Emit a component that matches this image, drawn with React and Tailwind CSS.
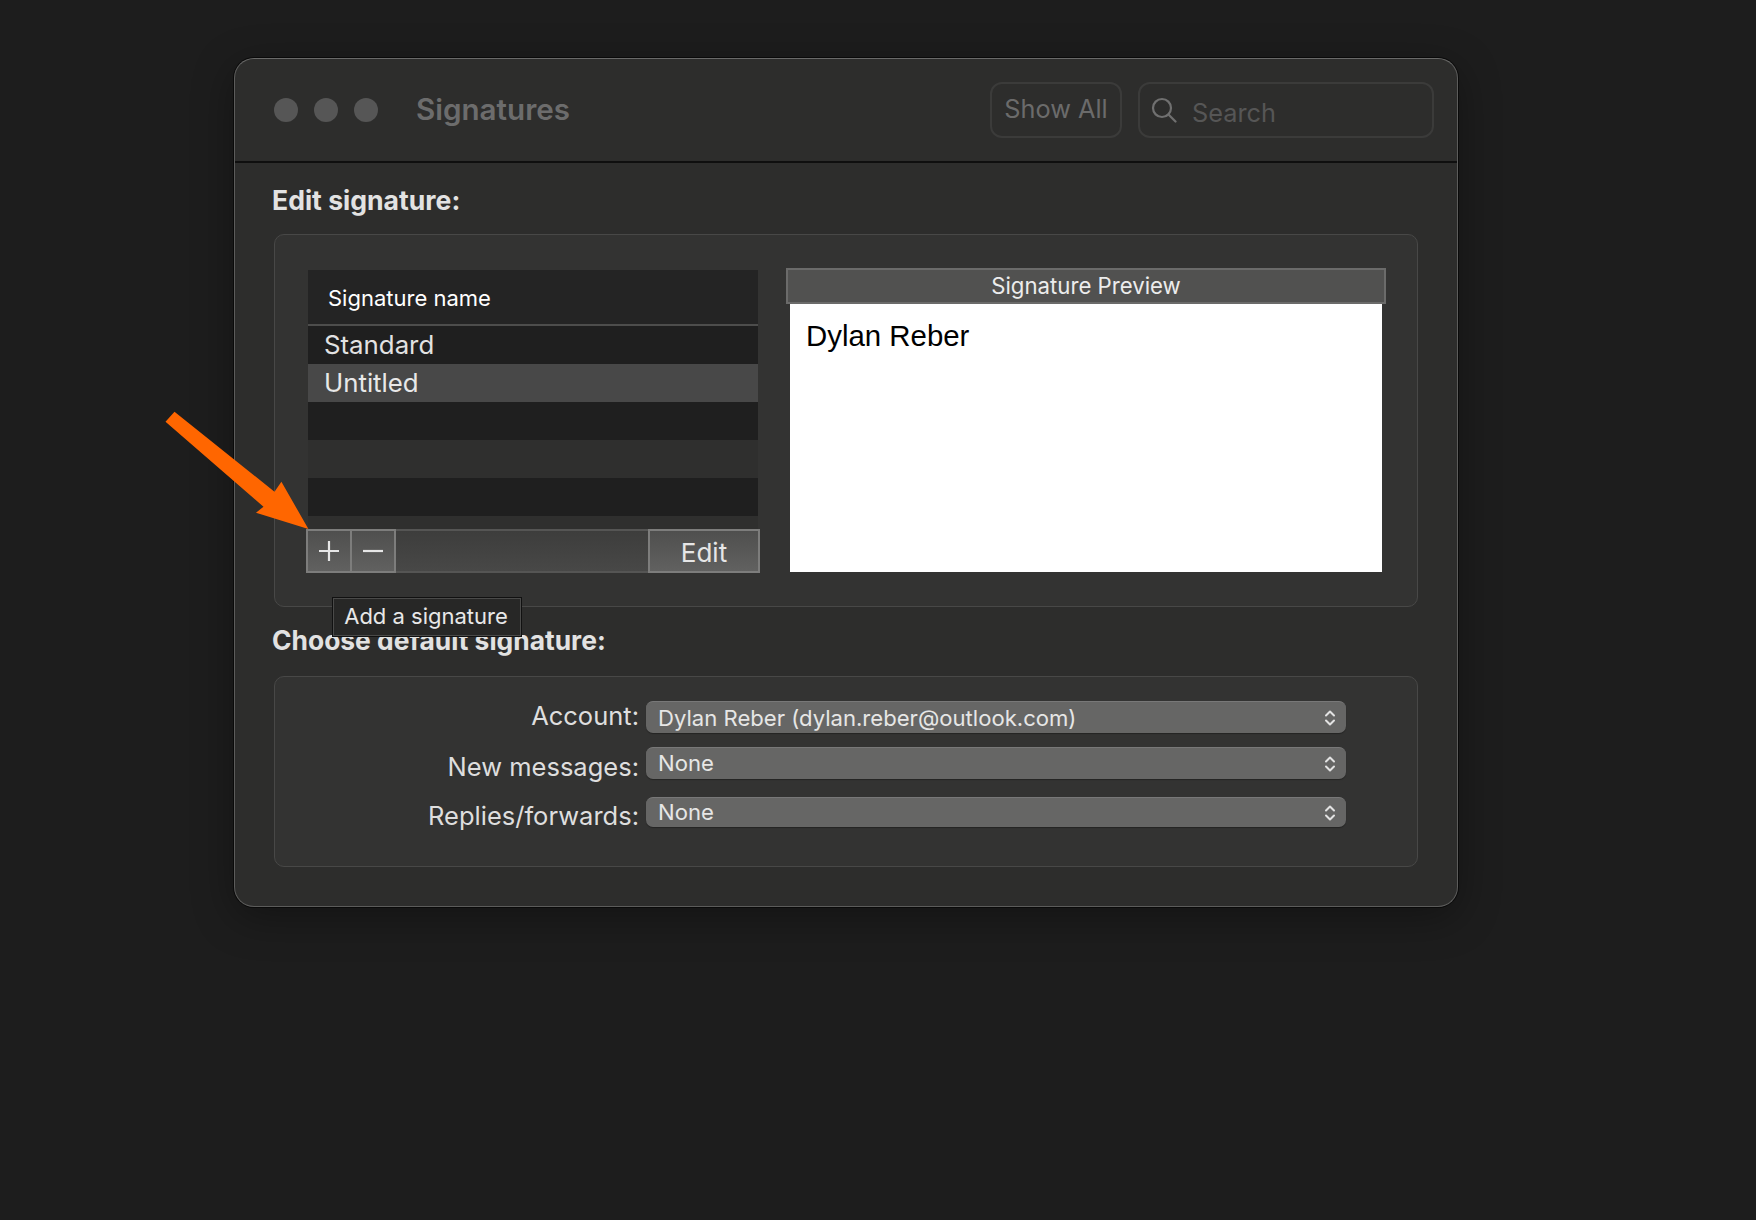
import React from "react";

const sans = "font-['Inter','Liberation_Sans',sans-serif]";

function Updown() {
  return (
    <svg width="12" height="18" viewBox="0 0 12 18" fill="none" stroke="#e2e2e2" strokeWidth="2" strokeLinecap="round" strokeLinejoin="round">
      <path d="M2 6.5 L6 2.5 L10 6.5" />
      <path d="M2 11.5 L6 15.5 L10 11.5" />
    </svg>
  );
}

function SelectRow({ label, value, labelPt, h, mt, textPb }) {
  return (
    <div className={`flex items-start ${mt}`}>
      <div className={`h-[26px] w-[364px] text-right text-[25.5px] leading-[32px] text-[#dedede] ${labelPt}`}>{label}</div>
      <div className={`ml-[7px] flex w-[700px] items-center justify-between rounded-[7px] border-t border-t-[#787878] bg-[#666665] pl-[12px] pr-[10px] shadow-[0_1px_1px_rgba(0,0,0,0.3)] ${h}`}>
        <span className={`text-[22.1px] leading-[28px] text-[#e6e6e6] ${textPb}`}>{value}</span>
        <Updown />
      </div>
    </div>
  );
}

export default function App() {
  return (
    <div className={`relative min-h-screen w-full overflow-hidden bg-[#1d1d1d] pl-[234px] pt-[58px] ${sans}`}>
      <div className="relative h-[849px] w-[1224px] rounded-[20px] border border-[#5c5c5b] border-t-[#6a6a69] bg-[#2d2d2c] shadow-[0_0_0_1px_#0a0a0a,0_10px_40px_rgba(0,0,0,0.35)]">
        {/* Title bar */}
        <div className="flex h-[104px] items-center border-b-2 border-b-[#0f0f0f] pl-[39px] pr-[23px]">
          <div className="flex gap-[16px]">
            <span className="h-[24px] w-[24px] rounded-full bg-[#565656]" />
            <span className="h-[24px] w-[24px] rounded-full bg-[#565656]" />
            <span className="h-[24px] w-[24px] rounded-full bg-[#565656]" />
          </div>
          <div className="ml-[38px] pb-[2px] text-[29.6px] font-semibold leading-[36px] text-[#6c6c6c]">Signatures</div>
          <div className="ml-auto flex h-[56px] w-[132px] items-center justify-center rounded-[12px] border-2 border-[#3b3b3a] pb-[2px] text-[25.3px] text-[#6b6b6b]">Show All</div>
          <div className="ml-[16px] flex h-[56px] w-[296px] items-center rounded-[12px] border-2 border-[#3b3b3a] pl-[11px]">
            <svg width="26" height="26" viewBox="0 0 26 26" fill="none" stroke="#707070" strokeWidth="2.2" strokeLinecap="round">
              <circle cx="11" cy="11" r="9" />
              <path d="M17.5 17.5 L24.5 24.5" />
            </svg>
            <span className="ml-[15px] mt-[6px] text-[25.3px] text-[#565656]">Search</span>
          </div>
        </div>

        {/* Content */}
        <div className="px-[39px] pt-[22px]">
          <div className="-ml-[2px] text-[26.6px] font-bold leading-[30px] text-[#e2e2e2]">Edit signature:</div>

          <div className="mt-[19px] flex h-[373px] items-start rounded-[10px] border border-[#484847] bg-[#333332] pl-[31px] pt-[33px]">
            <div className="w-[454px] pt-[2px]">
              <div className="mx-[2px] bg-[#2f2f2e]">
                <div className="flex h-[54px] items-center bg-[#242424] pl-[20px] pt-[2px] text-[22px] text-white">Signature name</div>
                <div className="h-[2px] bg-[#4d4d4c]" />
                <div className="flex h-[38px] items-center bg-[#1f1f1f] pl-[16px] text-[25.8px] text-[#e2e2e2]">Standard</div>
                <div className="flex h-[38px] items-center bg-[#484848] pl-[16px] text-[25.8px] text-[#e8e8e8]">Untitled</div>
                <div className="h-[38px] bg-[#1f1f1f]" />
                <div className="h-[38px] bg-[#2f2f2e]" />
                <div className="h-[38px] bg-[#1f1f1f]" />
                <div className="h-[13px]" />
              </div>
              <div className="flex h-[44px] border-y-2 border-y-[#555554] bg-gradient-to-b from-[#3d3d3c] to-[#484847]">
                <div className="-my-[2px] flex h-[44px] w-[46px] items-center justify-center border-2 border-[#7d7d7c] bg-gradient-to-b from-[#4f4f4e] to-[#616160]">
                  <svg width="22" height="22" viewBox="0 0 22 22" stroke="#e6e6e6" strokeWidth="2.2"><path d="M11 1 V21 M1 11 H21" /></svg>
                </div>
                <div className="-my-[2px] flex h-[44px] w-[44px] items-center justify-center border-2 border-l-0 border-[#7d7d7c] bg-gradient-to-b from-[#4f4f4e] to-[#616160]">
                  <svg width="22" height="22" viewBox="0 0 22 22" stroke="#e6e6e6" strokeWidth="2.2"><path d="M1 11 H21" /></svg>
                </div>
                <div className="-my-[2px] ml-auto flex h-[44px] w-[112px] items-center justify-center border-2 border-[#7d7d7c] bg-gradient-to-b from-[#4f4f4e] to-[#616160] pt-[2px] text-[26px] text-[#e6e6e6]">Edit</div>
              </div>
            </div>

            <div className="ml-[26px] w-[600px]">
              <div className="flex h-[36px] items-center justify-center border-2 border-[#6b6b6a] bg-[#515150] text-[22.2px] text-[#ececec]">Signature Preview</div>
              <div className="mx-[4px] h-[268px] bg-white pl-[16px] pt-[15px] font-['Liberation_Sans',sans-serif] text-[29.4px] leading-[34px] text-black">Dylan Reber</div>
            </div>
          </div>

          <div className="-ml-[2px] mt-[18px] text-[26.4px] font-bold leading-[30px] text-[#e2e2e2]">Choose default signature:</div>

          <div className="mt-[21px] h-[191px] rounded-[10px] border border-[#484847] bg-[#333332] pt-[24px]">
            <SelectRow label="Account:" value="Dylan Reber (dylan.reber@outlook.com)" labelPt="-mt-[1px]" h="h-[32px]" mt="" textPb="" />
            <SelectRow label="New messages:" value="None" labelPt="mt-[4px]" h="h-[32px]" mt="mt-[14px]" textPb="pb-[1px]" />
            <SelectRow label="Replies/forwards:" value="None" labelPt="mt-[3px]" h="h-[30px]" mt="mt-[18px]" textPb="pb-[1px]" />
          </div>
        </div>

        {/* Tooltip */}
        <div className="absolute left-[98px] top-[539px] flex h-[38px] w-[188px] items-center justify-center border border-[#4a4a49] bg-[#272726] pb-[2px] pr-[2px] text-[22px] text-[#e8e8e8] shadow-[0_0_0_1px_#111]">Add a signature</div>
      </div>

      {/* Annotation arrow */}
      <svg className="absolute left-[150px] top-[400px]" width="170" height="140" viewBox="150 400 170 140">
        <polygon fill="#ff6600" points="174.5,411.7 165.5,421.7 263.5,506.7 256,512.7 308.4,529 281.4,481.7 274.5,491.7" />
      </svg>
    </div>
  );
}
